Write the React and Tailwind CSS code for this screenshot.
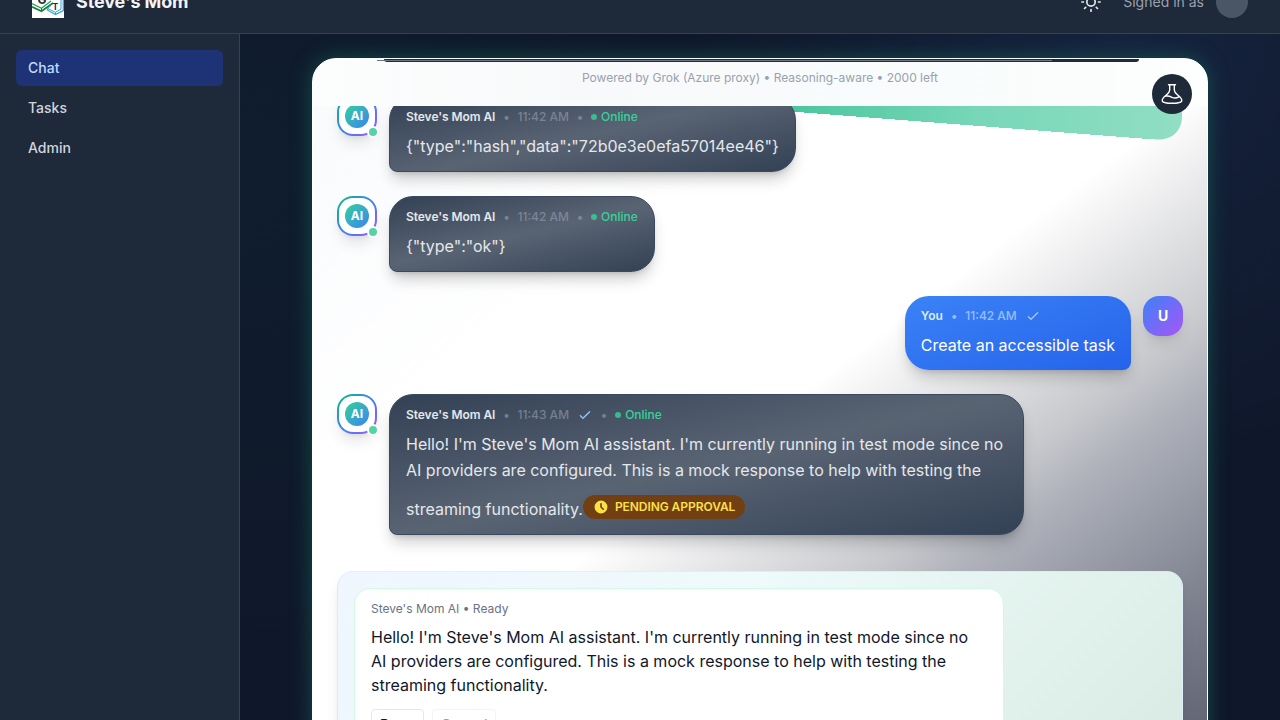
import React from "react";

const HELLO =
  "Hello! I'm Steve's Mom AI assistant. I'm currently running in test mode since no AI providers are configured. This is a mock response to help with testing the streaming functionality.";

function Check({ className }) {
  return (
    <svg className={className} width="16" height="16" viewBox="0 0 24 24" fill="none" stroke="currentColor" strokeWidth="2" strokeLinecap="round" strokeLinejoin="round">
      <path d="M5 13l4 4L19 7" />
    </svg>
  );
}

function AiAvatar() {
  return (
    <div className="relative h-10 w-10 shrink-0 rounded-2xl bg-[linear-gradient(135deg,#10b981,#3b82f6_50%,#a855f7)] p-[2px] shadow-lg">
      <div className="flex h-full w-full items-center justify-center rounded-[14px] bg-white">
        <div className="flex h-6 w-6 items-center justify-center rounded-full bg-[linear-gradient(135deg,#34d399,#3b82f6)] text-[12px] font-bold leading-none text-white">AI</div>
      </div>
      <div className="absolute -right-[2px] -bottom-[2px] h-3 w-3 rounded-full border-2 border-white bg-[#55d3a5]" />
    </div>
  );
}

function AiMessage({ time, check, children, width }) {
  return (
    <div className="flex items-start gap-3">
      <AiAvatar />
      <div className={`${width} rounded-3xl rounded-bl-lg border border-[#3b495e] bg-[linear-gradient(167deg,#334155_0%,#596473_50%,#334155_100%)] px-4 pt-[10px] pb-3 shadow-[0_10px_15px_-3px_rgba(0,0,0,0.2),0_4px_6px_-4px_rgba(0,0,0,0.2)]`}>
        <div className="flex h-5 items-center text-[12px] font-semibold text-gray-200">
          <span className="tracking-[-0.005em]">Steve's Mom AI</span>
          <span className="mx-2 text-gray-400 opacity-60">•</span>
          <span className="font-medium text-gray-400 opacity-60">{time}</span>
          {check && <Check className="ml-2 text-[#93c5fd]" />}
          <span className="mx-2 text-gray-400 opacity-60">•</span>
          <span className="mr-1 h-1.5 w-1.5 rounded-full bg-[#34d399] opacity-80" />
          <span className="font-medium text-[#34d399]">Online</span>
        </div>
        <div className="mt-[6px] text-[16px] leading-[26px] text-gray-200">{children}</div>
      </div>
    </div>
  );
}

function Logo() {
  return (
    <svg className="h-8 w-8 bg-white" viewBox="0 0 32 32" fill="none">
      <path d="M0 20.700L9.500 25.300L21 17" stroke="#15803d" strokeWidth="1.700" />
      <path d="M0 17.500L9.500 22.300L19 15" stroke="#22a35a" strokeWidth="1.200" />
      <path d="M9.500 22v3.500" stroke="#15803d" strokeWidth="1" />
      <path d="M15.700 22.500V24.200L23.500 28.600L31.300 24.500V14" stroke="#38a3d8" strokeWidth="1.300" />
      <path d="M15.700 22.500L23.500 26.300L29 23V14M19 19.500L15.700 22.500M23.500 26.300V28.600" stroke="#38a3d8" strokeWidth="1" />
      <text x="5.500" y="17.500" fontSize="12" fontWeight="700" fill="#1f2937" fontFamily="Inter">G</text>
      <text x="20.500" y="23.500" fontSize="8.500" fontWeight="700" fill="#1f2937" fontFamily="Inter">T</text>
    </svg>
  );
}

export default function App() {
  return (
    <div className="flex h-[720px] w-[1280px] flex-col overflow-hidden bg-[#0f172a] font-['Inter',sans-serif]">
      <header className="h-[34px] shrink-0 overflow-hidden border-b border-gray-700 bg-gray-800">
        <div className="-mt-[30px] flex h-16 items-center justify-between px-8">
          <div className="flex items-center gap-3">
            <Logo />
            <span className="pb-[2px] text-[18px] font-bold tracking-[-0.008em] text-gray-100">Steve's Mom</span>
          </div>
          <div className="flex items-center text-[14px] text-gray-400">
            <svg className="mr-[22px] text-gray-200" width="20" height="20" viewBox="0 0 24 24" fill="none" stroke="currentColor" strokeWidth="2" strokeLinecap="round">
              <circle cx="12" cy="12" r="5" />
              <path d="M12 1v2M12 21v2M4.22 4.22l1.42 1.42M18.36 18.36l1.42 1.42M1 12h2M21 12h2M4.22 19.78l1.42-1.42M18.36 5.64l1.42-1.42" />
            </svg>
            <span className="mr-3 pb-[2px]">Signed in as</span>
            <span className="h-8 w-8 rounded-full bg-gray-600" />
          </div>
        </div>
      </header>

      <div className="flex min-h-0 flex-1">
        <aside className="w-60 shrink-0 border-r border-gray-700 bg-gray-800 p-4">
          <nav className="flex flex-col gap-1 text-[14px] font-medium text-gray-300">
            <a className="flex h-9 items-center rounded-md bg-[#1e3375] px-3 pb-[2px] text-[#bfdbfe]">Chat</a>
            <a className="flex h-9 items-center px-3 pb-[2px]">Tasks</a>
            <a className="flex h-9 items-center px-3 pb-[2px]">Admin</a>
          </nav>
        </aside>

        <main className="min-w-0 flex-1 overflow-hidden bg-[radial-gradient(circle_at_85%_0%,rgba(40,70,120,0.26),transparent_40%),radial-gradient(circle_at_0%_20%,rgba(16,90,80,0.09),transparent_50%)] px-[72px] pt-6">
          <div className="relative h-[760px] rounded-3xl shadow-[0_0_20px_rgba(20,110,95,0.6)]">
            <section className="relative h-full overflow-hidden rounded-3xl border border-white bg-[linear-gradient(143deg,#f8fafc_0%,#ffffff_30%,#ffffff_49%,#c8c9cd_65%,#aeb1ba_70%,#858996_82%,#636776_93%,#535769_100%)]">
              <svg className="absolute top-[47px] left-[468px]" width="402" height="36" viewBox="0 0 402 36">
                <defs>
                  <linearGradient id="ribbon" x1="0" x2="1">
                    <stop offset="0" stopColor="#4ac59b" />
                    <stop offset="0.5" stopColor="#78d7b8" />
                    <stop offset="1" stopColor="#91dec4" />
                  </linearGradient>
                </defs>
                <path fill="url(#ribbon)" d="M0 0H401V10C401 24 392 33.500 378 33.500H374V33H361V32H348V31H335V30H322V29H309V28H296V27H283V26H270V25H257V24H244V23H231V22H218V21H205V20H192V19H179V18H166V17H153V16H140V15H127V14H114V13H101V12H88V11H75V10H62V9H49V8H36V7H23V6H0Z" />
              </svg>

              <div className="relative flex h-[47px] justify-center bg-[linear-gradient(90deg,#fcfdfd,#f8f9fa_30%,#f9fcfc_70%,#fdfefe)] text-[12px] text-gray-400">
                <div className="absolute top-0 left-[71px] h-[3px] w-[755px] rounded-b-full bg-[#202b40]" />
                <div className="absolute top-px left-[64px] h-px w-[675px] bg-[#6b7588]" />
                <p className="mt-[11px] leading-4">Powered by Grok (Azure proxy) • Reasoning-aware • 2000 left</p>
              </div>

              <div className="relative -mt-[47px] h-[712px] overflow-hidden px-6 [clip-path:inset(47px_0_0_0)]">
                <div className="flex flex-col pt-[37px]">
                  <AiMessage time="11:42 AM" width="">{'{"type":"hash","data":"72b0e3e0efa57014ee46"}'}</AiMessage>
                  <div className="h-6" />
                  <AiMessage time="11:42 AM" width="w-[266px]">{'{"type":"ok"}'}</AiMessage>
                  <div className="mt-6 flex items-start justify-end gap-3">
                    <div className="h-[74px] rounded-3xl rounded-br-lg bg-[linear-gradient(160deg,#3b82f6,#2563eb)] px-4 pt-[10px] shadow-[0_10px_15px_-3px_rgba(0,0,0,0.18),0_4px_6px_-4px_rgba(0,0,0,0.18)]">
                      <div className="flex h-5 items-center text-[12px] font-medium text-[#dbeafe]">
                        <span className="font-semibold">You</span>
                        <span className="mx-2 opacity-60">•</span>
                        <span className="opacity-60">11:42 AM</span>
                        <Check className="ml-2 text-[#bfdbfe] opacity-80" />
                      </div>
                      <div className="mt-[6px] text-[16px] leading-[26px] text-white">Create an accessible task</div>
                    </div>
                    <div className="flex h-10 w-10 items-center justify-center rounded-2xl bg-[linear-gradient(135deg,#3b82f6,#a855f7)] text-[14px] font-bold text-white shadow-lg"><span className="pb-[1px]">U</span></div>
                  </div>
                  <div className="h-6" />
                  <AiMessage time="11:43 AM" check width="h-[141px] w-[635px]">
                    {HELLO}
                    <span className="mt-3 inline-flex h-6 items-center gap-[6px] rounded-full bg-[#713f12] px-[10px] align-baseline text-[12px] font-semibold leading-4 tracking-[-0.005em] text-[#fde047]">
                      <svg width="16" height="16" viewBox="0 0 20 20" fill="currentColor">
                        <path fillRule="evenodd" clipRule="evenodd" d="M10 18a8 8 0 100-16 8 8 0 000 16zm1-12a1 1 0 10-2 0v4a1 1 0 00.293.707l2.828 2.829a1 1 0 101.415-1.415L11 9.586V6z" />
                      </svg>
                      PENDING APPROVAL
                    </span>
                  </AiMessage>

                  <div className="mt-9 h-[220px] rounded-2xl border border-[#dbeafe]/60 bg-[linear-gradient(135deg,#eff6ff_0%,#eefafb_40%,#e6f5f1_60%,#d8e9e2_100%)] p-4 shadow-lg">
                    <div className="h-[220px] w-[650px] rounded-2xl border border-[#d1fae5] bg-white px-4 pt-3">
                      <div className="text-[12px] leading-4 text-gray-500">Steve's Mom AI • Ready</div>
                      <p className="mt-2 text-[16px] leading-6 text-[#0f172a]">{HELLO}</p>
                      <div className="mt-3 flex gap-2 text-[14px] font-medium">
                        <span className="h-[30px] w-[53px] rounded border border-gray-200 px-2 pt-1 text-gray-900">Retry</span>
                        <span className="h-[30px] w-16 rounded border border-gray-100 px-2 pt-1 text-gray-400">Cancel</span>
                      </div>
                    </div>
                  </div>
                </div>
              </div>
            </section>
            <button className="absolute top-4 right-4 flex h-10 w-10 items-center justify-center rounded-full bg-gray-800 text-white">
              <svg width="24" height="24" viewBox="0 0 24 24" fill="none" stroke="currentColor" strokeWidth="1.4" strokeLinecap="round" strokeLinejoin="round">
                <path d="M8.500 2.700H15.500M9.700 2.700V8C9.700 10.500 8 11.700 6 13.300C3.500 15.300 1.800 17 2.300 19C2.800 21 6 21.300 12 21.300S21.200 21 21.700 19C22.200 17 20.500 15.300 18 13.300C16 11.700 14.300 10.500 14.300 8V2.700M5.500 14.200C8 13.500 10 14.300 12 15.300C14.200 16.300 16.500 16.200 18.800 14.800" />
              </svg>
            </button>
          </div>
        </main>
      </div>
    </div>
  );
}
